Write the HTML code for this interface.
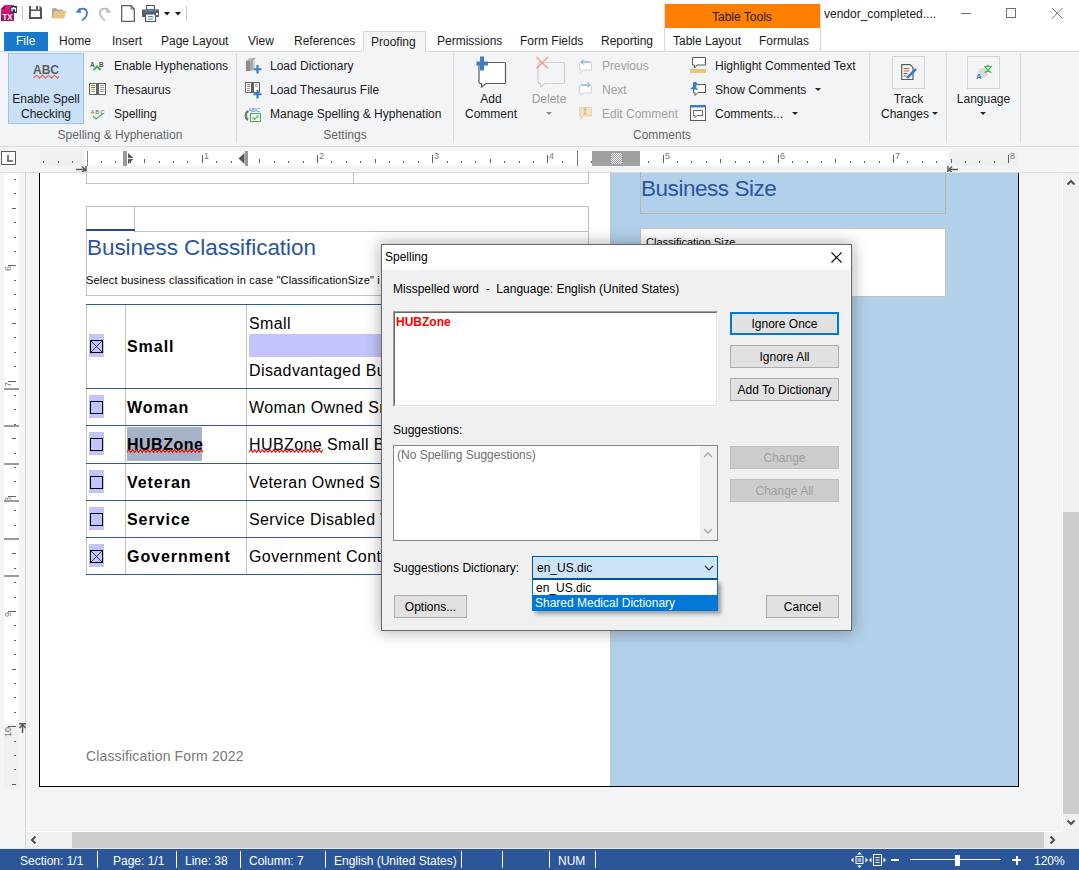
<!DOCTYPE html>
<html><head><meta charset="utf-8">
<style>
*{box-sizing:border-box}
html,body{margin:0;padding:0;width:1079px;height:870px;overflow:hidden;background:#fff;font-family:"Liberation Sans",sans-serif;font-size:12px;color:#1a1a1a}
.a{position:absolute}
.t{position:absolute;white-space:nowrap;line-height:12px;font-size:12px}
svg{position:absolute;overflow:visible}
</style></head><body>

<!-- ===== TITLE BAR ===== -->
<div class="a" id="titlebar" style="left:0;top:0;width:1079px;height:28px;background:#fff"></div>
<div class="a" style="left:665px;top:4px;width:155px;height:24px;background:#ff8000"></div>
<div class="t" style="left:712px;top:11px;color:#1a1a1a">Table Tools</div>
<div class="t" style="left:824px;top:8px;color:#1a1a1a">vendor_completed....</div>

<!-- ===== TAB ROW ===== -->
<div class="a" style="left:4px;top:32px;width:44px;height:19px;background:#1979ca"></div>
<div class="t" style="left:16px;top:35px;color:#fff">File</div>
<div class="t" style="left:59px;top:35px">Home</div>
<div class="t" style="left:112px;top:35px">Insert</div>
<div class="t" style="left:161px;top:35px">Page Layout</div>
<div class="t" style="left:248px;top:35px">View</div>
<div class="t" style="left:294px;top:35px">References</div>
<div class="a" style="left:363px;top:31px;width:63px;height:21px;background:#f3f4f6;border:1px solid #d5d5d5;border-bottom:none"></div>
<div class="t" style="left:371px;top:36px">Proofing</div>
<div class="t" style="left:437px;top:35px">Permissions</div>
<div class="t" style="left:520px;top:35px">Form Fields</div>
<div class="t" style="left:601px;top:35px">Reporting</div>
<div class="a" style="left:664px;top:3px;width:157px;height:48px;border-left:1px solid #dadada;border-right:1px solid #dadada"></div>
<div class="t" style="left:673px;top:35px">Table Layout</div>
<div class="t" style="left:759px;top:35px">Formulas</div>

<!-- ===== RIBBON ===== -->
<div class="a" id="ribbon" style="left:0;top:51px;width:1079px;height:96px;background:#f3f4f6;border-top:1px solid #dadada;border-bottom:1px solid #dadada"></div>
<div class="a" style="left:364px;top:51px;width:61px;height:1px;background:#f3f4f6"></div>


<!-- title bar icons -->
<svg style="left:1px;top:5px" width="17" height="16" viewBox="0 0 17 16">
  <defs><linearGradient id="txg" x1="0" y1="0" x2="0" y2="1"><stop offset="0" stop-color="#f0188a"/><stop offset="0.45" stop-color="#cc1570"/><stop offset="1" stop-color="#9a0f58"/></linearGradient></defs>
  <path d="M4 0 H13 V16 H0 V4 Z" fill="url(#txg)"/>
  <path d="M4 0 V4 H0 Z" fill="#7a0c44"/>
  <rect x="9.5" y="1" width="6.5" height="7" fill="#1d3565"/>
  <path d="M11 6.5 V3.5 H14.5 V6.5 M12.5 3.5 V2" fill="none" stroke="#fff" stroke-width="1.3"/>
  <text x="6.5" y="15" font-size="8.5" font-weight="bold" fill="#fff" text-anchor="middle" font-family="Liberation Sans" textLength="10" lengthAdjust="spacingAndGlyphs">TX</text>
</svg>
<div class="a" style="left:22px;top:6px;width:1px;height:15px;background:#c8c8c8"></div>
<svg style="left:29px;top:6px" width="13" height="13" viewBox="0 0 13 13">
  <path fill-rule="evenodd" d="M0 0 H2 V3.5 H10.5 V0 H11 L13 2 V13 H0 Z M2 5 V11 H11 V5 Z" fill="#555"/>
  <rect x="7" y="0" width="2" height="3.5" fill="#555"/>
</svg>
<svg style="left:52px;top:8px" width="15" height="11" viewBox="0 0 15 11">
  <path d="M0 1.5 Q0 0 1.5 0 H4 L5.5 1.5 H10 Q11 1.5 11 2.5 V10 H0 Z" fill="#ababab"/>
  <path d="M2 3 H14.5 L12 10.5 H0.5 Z" fill="#ebc57c"/>
</svg>
<svg style="left:75px;top:6px" width="14" height="15" viewBox="0 0 14 15">
  <path d="M3.5 4.5 C6 1.5 12 2 12 7 C12 11 9 13 7 14.5" fill="none" stroke="#3d7cc3" stroke-width="1.8"/>
  <path d="M0.5 6.5 L5 1.5 L6 7 Z" fill="#3d7cc3"/>
</svg>
<svg style="left:98px;top:6px" width="14" height="15" viewBox="0 0 14 15">
  <path d="M10.5 4.5 C8 1.5 2 2 2 7 C2 11 5 13 7 14.5" fill="none" stroke="#bdbdbd" stroke-width="1.8"/>
  <path d="M13.5 6.5 L9 1.5 L8 7 Z" fill="#bdbdbd"/>
</svg>
<svg style="left:121px;top:5px" width="14" height="17" viewBox="0 0 14 17">
  <path d="M0.7 0.7 H10 L13.3 4 V16.3 H0.7 Z" fill="#fff" stroke="#5f5f5f" stroke-width="1.3"/>
  <path d="M10 0.7 V4 H13.3" fill="none" stroke="#5f5f5f" stroke-width="1"/>
</svg>
<svg style="left:142px;top:5px" width="17" height="17" viewBox="0 0 17 17">
  <rect x="4.5" y="0.5" width="8" height="4" fill="#fff" stroke="#5f5f5f" stroke-width="1.2"/>
  <rect x="0" y="4.5" width="17" height="7.5" fill="#5f5f5f"/>
  <rect x="3" y="4.5" width="11" height="2" fill="#4f86c6"/>
  <rect x="3.5" y="9" width="10" height="7.5" fill="#fff" stroke="#5f5f5f" stroke-width="1.2"/>
  <rect x="6" y="11" width="5" height="1" fill="#4f86c6"/><rect x="6" y="13.5" width="5" height="1" fill="#4f86c6"/>
  <rect x="14" y="8" width="2" height="2" fill="#fff"/>
</svg>
<svg style="left:164px;top:12px" width="6" height="4"><path d="M0 0 H6 L3 3.5 Z" fill="#1a1a1a"/></svg>
<svg style="left:175px;top:12px" width="6" height="4"><path d="M0 0 H6 L3 3.5 Z" fill="#1a1a1a"/></svg>
<div class="a" style="left:186px;top:6px;width:1px;height:15px;background:#c8c8c8"></div>
<div class="a" style="left:961px;top:13px;width:10px;height:1px;background:#707070"></div>
<div class="a" style="left:1006px;top:8px;width:10px;height:10px;border:1px solid #707070"></div>
<svg style="left:1052px;top:8px" width="11" height="11" viewBox="0 0 11 11"><path d="M0 0 L10.5 10.5 M10.5 0 L0 10.5" stroke="#707070" stroke-width="1"/></svg>

<!-- ribbon: Spelling & Hyphenation -->
<div class="a" style="left:8px;top:53px;width:76px;height:71px;background:#c9e0f7;border:1px solid #98c6ee"></div>
<svg style="left:33px;top:64px" width="27" height="16" viewBox="0 0 27 16">
  <text x="13" y="9.6" font-size="12.5" font-weight="bold" fill="#5f5f5f" text-anchor="middle" font-family="Liberation Sans" textLength="26" lengthAdjust="spacingAndGlyphs">ABC</text>
  <path d="M0.5 14.2 L3.5 11.2 L6.5 14.2 L9.5 11.2 L12.5 14.2 L15.5 11.2 L18.5 14.2 L21.5 11.2 L24.5 14.2 L26 12.7" fill="none" stroke="#e2673f" stroke-width="1.1"/>
</svg>
<div class="t" style="left:8px;width:76px;text-align:center;top:93px">Enable Spell</div>
<div class="t" style="left:8px;width:76px;text-align:center;top:108px">Checking</div>
<svg style="left:90px;top:61px" width="16" height="10" viewBox="0 0 16 10">
  <text x="0" y="6" font-size="6.5" fill="#555" font-family="Liberation Sans" font-weight="bold">A</text>
  <text x="9" y="6" font-size="6.5" fill="#555" font-family="Liberation Sans" font-weight="bold">B</text>
  <path d="M3.5 9 L7 5.5 L10.5 9" fill="none" stroke="#3cb44a" stroke-width="2"/>
</svg>
<div class="t" style="left:114px;top:60px">Enable Hyphenations</div>
<svg style="left:89px;top:83px" width="17" height="12" viewBox="0 0 17 12">
  <path d="M0.5 0.5 H7.5 V11.5 H0.5 Z M9.5 0.5 H16.5 V11.5 H9.5 Z" fill="#fff" stroke="#606060" stroke-width="1"/>
  <rect x="7" y="0" width="3" height="12" fill="#606060"/>
  <rect x="2" y="2" width="4" height="1" fill="#3cb44a"/><rect x="2" y="4" width="4" height="1" fill="#e0503c"/>
  <rect x="2" y="6" width="4" height="1" fill="#9a9a9a"/><rect x="2" y="8" width="4" height="1" fill="#9a9a9a"/>
  <rect x="11" y="2" width="4" height="1" fill="#9a9a9a"/><rect x="11" y="4" width="4" height="1" fill="#9a9a9a"/>
  <rect x="11" y="6" width="4" height="1" fill="#9a9a9a"/><rect x="11" y="8" width="4" height="1" fill="#9a9a9a"/>
</svg>
<div class="t" style="left:114px;top:84px">Thesaurus</div>
<svg style="left:90px;top:108px" width="16" height="13" viewBox="0 0 16 13">
  <text x="7.5" y="6" font-size="6" fill="#666" text-anchor="middle" font-family="Liberation Sans" textLength="14">ABC</text>
  <path d="M3 8 L6 11 L13 5.5" fill="none" stroke="#3cb44a" stroke-width="1.2"/>
</svg>
<div class="t" style="left:114px;top:108px">Spelling</div>
<div class="t" style="left:0px;width:240px;text-align:center;top:129px;color:#666">Spelling &amp; Hyphenation</div>
<div class="a" style="left:236px;top:53px;width:1px;height:90px;background:#dadada"></div>

<!-- Settings -->
<svg style="left:245px;top:57px" width="17" height="17" viewBox="0 0 17 17">
  <path d="M1 4 L4 1 H8 L5 4 Z" fill="#bdbdbd"/>
  <path d="M1 4 H5 V14 H1 Z" fill="#8c8c8c"/>
  <path d="M5 4 L8 1 V11 L5 14 Z" fill="#6e6e6e"/>
  <path d="M5 4 L8 1 H11 L8 4 V13 L5 14 Z" fill="#a8a8a8"/>
  <path d="M8 4 H10 V12 H8 Z" fill="#d0d0d0"/>
  <path d="M12.5 8 V16.5 M8.5 12.25 H16.5" stroke="#3d7cc3" stroke-width="2.2"/>
</svg>
<div class="t" style="left:270px;top:60px">Load Dictionary</div>
<svg style="left:245px;top:82px" width="17" height="17" viewBox="0 0 17 17">
  <path d="M0.5 0.5 H6.5 V10.5 H0.5 Z M8.5 0.5 H14.5 V10.5 H8.5 Z" fill="#fff" stroke="#606060" stroke-width="1"/>
  <rect x="6" y="0" width="3" height="11" fill="#606060"/>
  <rect x="2" y="2" width="3" height="1" fill="#3cb44a"/><rect x="2" y="4" width="3" height="1" fill="#e0503c"/><rect x="2" y="6" width="3" height="1" fill="#9a9a9a"/><rect x="2" y="8" width="3" height="1" fill="#9a9a9a"/>
  <rect x="10" y="2" width="3" height="1" fill="#9a9a9a"/><rect x="10" y="4" width="3" height="1" fill="#9a9a9a"/>
  <path d="M12.5 8 V16.5 M8.5 12.25 H16.5" stroke="#3d7cc3" stroke-width="2.2"/>
</svg>
<div class="t" style="left:270px;top:84px">Load Thesaurus File</div>
<svg style="left:245px;top:106px" width="17" height="16" viewBox="0 0 17 16">
  <text x="9" y="6" font-size="6" fill="#4f86c6" text-anchor="middle" font-family="Liberation Sans" textLength="12">ABC</text>
  <path d="M3 5 C0 7 0 12 3 14" fill="none" stroke="#777" stroke-width="2.5"/>
  <rect x="5.5" y="7.5" width="10" height="8" fill="#fff" stroke="#3cb44a" stroke-width="1"/>
  <path d="M7.5 11.5 L9.5 13.5 L13.5 9.5" fill="none" stroke="#3cb44a" stroke-width="1.2"/>
</svg>
<div class="t" style="left:270px;top:108px">Manage Spelling &amp; Hyphenation</div>
<div class="t" style="left:237px;width:216px;text-align:center;top:129px;color:#666">Settings</div>
<div class="a" style="left:453px;top:53px;width:1px;height:90px;background:#dadada"></div>

<!-- Comments -->
<svg style="left:476px;top:56px" width="31" height="31" viewBox="0 0 31 31">
  <path d="M4.5 6.5 H28 a1.5 1.5 0 0 1 1.5 1.5 V26 a1.5 1.5 0 0 1 -1.5 1.5 H10 L5.5 31 V27.5 H4.5 a1.5 1.5 0 0 1 -1.5 -1.5 V8 a1.5 1.5 0 0 1 1.5 -1.5 Z" fill="#fff" stroke="#595959" stroke-width="1.2"/>
  <path d="M6 0.5 V14.5 M0.5 7.5 H12" stroke="#3f7dc0" stroke-width="4"/>
</svg>
<div class="t" style="left:464px;width:54px;text-align:center;top:93px">Add</div>
<div class="t" style="left:462px;width:58px;text-align:center;top:108px">Comment</div>
<svg style="left:535px;top:56px" width="31" height="31" viewBox="0 0 31 31">
  <path d="M4.5 6.5 H28 a1.5 1.5 0 0 1 1.5 1.5 V26 a1.5 1.5 0 0 1 -1.5 1.5 H10 L5.5 31 V27.5 H4.5 a1.5 1.5 0 0 1 -1.5 -1.5 V8 a1.5 1.5 0 0 1 1.5 -1.5 Z" fill="none" stroke="#d0d0d0" stroke-width="1.2"/>
  <path d="M1.5 1 L13 12.5 M13 1 L1.5 12.5" stroke="#eea596" stroke-width="1.6"/>
</svg>
<div class="t" style="left:531px;width:36px;text-align:center;top:93px;color:#a0a0a0">Delete</div>
<svg style="left:546px;top:112px" width="6" height="4"><path d="M0 0 H6 L3 3 Z" fill="#8a8a8a"/></svg>
<svg style="left:578px;top:59px" width="15" height="14" viewBox="0 0 15 14">
  <path d="M1.5 3.5 H13.5 V11 H5 L3 13.5 V11 H1.5 Z" fill="#fff" stroke="#c9d4e2" stroke-width="1"/>
  <path d="M3 3 H12 M3 3 L5.5 0.8 M3 3 L5.5 5.2" stroke="#9fbce0" stroke-width="1.3" fill="none"/>
</svg>
<div class="t" style="left:602px;top:60px;color:#a0a0a0">Previous</div>
<svg style="left:578px;top:82px" width="15" height="14" viewBox="0 0 15 14">
  <path d="M1.5 3.5 H13.5 V11 H5 L3 13.5 V11 H1.5 Z" fill="#fff" stroke="#c9d4e2" stroke-width="1"/>
  <path d="M3 3 H12 M12 3 L9.5 0.8 M12 3 L9.5 5.2" stroke="#9fbce0" stroke-width="1.3" fill="none"/>
</svg>
<div class="t" style="left:602px;top:84px;color:#a0a0a0">Next</div>
<svg style="left:578px;top:106px" width="15" height="15" viewBox="0 0 15 15">
  <path d="M1.5 1.5 H13.5 V10 H5 L3 13.5 V10 H1.5 Z" fill="#f3e2c0" stroke="#e8d3a8" stroke-width="1"/>
  <path d="M7 3 V8 M5.5 3 H8.5 M5.5 8 H8.5" stroke="#b9a37a" stroke-width="0.8"/>
</svg>
<div class="t" style="left:602px;top:108px;color:#a0a0a0">Edit Comment</div>
<svg style="left:690px;top:57px" width="16" height="16" viewBox="0 0 16 16">
  <path d="M2.5 0.5 H15.5 V8 H7 L4.5 11 V8 H2.5 Z" fill="#fff" stroke="#595959" stroke-width="1"/>
  <rect x="0" y="12" width="16" height="4" fill="#e9c77a"/>
</svg>
<div class="t" style="left:715px;top:60px">Highlight Commented Text</div>
<svg style="left:690px;top:81px" width="16" height="16" viewBox="0 0 16 16">
  <path d="M3.5 3.5 H15.5 V11.5 H8 L5 14.5 V11.5 H3.5 Z" fill="#fff" stroke="#595959" stroke-width="1"/>
  <circle cx="5" cy="3" r="2.2" fill="#3f7dc0"/><path d="M0 8 L5 4 L8 9 Z" fill="#3f7dc0"/>
</svg>
<div class="t" style="left:715px;top:84px">Show Comments</div>
<svg style="left:815px;top:88px" width="6" height="4"><path d="M0 0 H6 L3 3 Z" fill="#262626"/></svg>
<svg style="left:690px;top:105px" width="16" height="17" viewBox="0 0 16 17">
  <rect x="0.5" y="1.5" width="15" height="14" fill="#fff" stroke="#595959" stroke-width="1"/>
  <rect x="0" y="0" width="16" height="2.5" fill="#3f7dc0"/>
  <path d="M3.5 5.5 H12.5 V10.5 H7 L5 12.5 V10.5 H3.5 Z" fill="none" stroke="#595959" stroke-width="0.9"/>
</svg>
<div class="t" style="left:715px;top:108px">Comments...</div>
<svg style="left:792px;top:112px" width="6" height="4"><path d="M0 0 H6 L3 3 Z" fill="#262626"/></svg>
<div class="t" style="left:454px;width:416px;text-align:center;top:129px;color:#666">Comments</div>
<div class="a" style="left:869px;top:53px;width:1px;height:90px;background:#dadada"></div>

<!-- Track Changes -->
<div class="a" style="left:892px;top:56px;width:33px;height:33px;border:1px solid #d4d4d4"></div>
<svg style="left:901px;top:64px" width="17" height="17" viewBox="0 0 17 17">
  <path d="M0.7 0.7 H9 L12 3.7 V15.5 H0.7 Z" fill="#fff" stroke="#595959" stroke-width="1.2"/>
  <rect x="2.5" y="4" width="6" height="1" fill="#e0503c"/><rect x="2.5" y="6.5" width="6" height="1" fill="#e0503c"/><rect x="2.5" y="9" width="4" height="1" fill="#595959"/><rect x="2.5" y="11.5" width="3" height="1" fill="#595959"/>
  <path d="M6 14 L15 5" stroke="#3f7dc0" stroke-width="2.5"/>
</svg>
<div class="t" style="left:870px;width:77px;text-align:center;top:93px">Track</div>
<div class="t" style="left:881px;top:108px">Changes</div>
<svg style="left:932px;top:112px" width="6" height="4"><path d="M0 0 H6 L3 3 Z" fill="#262626"/></svg>
<div class="a" style="left:946px;top:53px;width:1px;height:90px;background:#dadada"></div>

<!-- Language -->
<div class="a" style="left:967px;top:56px;width:33px;height:33px;border:1px solid #d4d4d4"></div>
<svg style="left:975px;top:64px" width="17" height="16" viewBox="0 0 17 16">
  <circle cx="8" cy="9" r="5" fill="#d9d9d9"/>
  <text x="1" y="15" font-size="8" font-weight="bold" fill="#3f7dc0" font-family="Liberation Sans">A</text>
  <path d="M13 0.5 V2 M9 2.5 H17 M10.5 3 Q12 7 16.5 8.5 M15.5 3 Q14 7 9.5 8.5" fill="none" stroke="#3cb44a" stroke-width="1.2"/>
</svg>
<div class="t" style="left:947px;width:73px;text-align:center;top:93px">Language</div>
<svg style="left:980px;top:112px" width="6" height="4"><path d="M0 0 H6 L3 3 Z" fill="#262626"/></svg>
<div class="a" style="left:1020px;top:53px;width:1px;height:90px;background:#dadada"></div>

<!-- ===== RULER AREA ===== -->
<div class="a" style="left:0;top:147px;width:1079px;height:25px;background:#f3f4f6"></div>


<div class="a" style="left:1px;top:151px;width:15px;height:14px;border:1px solid #5a5a5a;background:#fff"></div>
<svg style="left:7px;top:155px" width="6" height="7"><path d="M1 0 V6 H6" fill="none" stroke="#5a5a5a" stroke-width="1.6"/></svg>
<div class="a" style="left:40px;top:151px;width:978px;height:15px;background:#fff"></div>
<div class="a" style="left:40px;top:151px;width:45px;height:15px;background:#f0f0f0"></div>
<div class="a" style="left:949px;top:151px;width:69px;height:15px;background:#f0f0f0"></div>
<div class="a" style="left:87px;top:151px;width:1px;height:15px;background:#888"></div>
<div class="a" style="left:76px;top:169px;width:9px;height:1px;background:#5a5a5a"></div>
<svg style="left:76px;top:166px" width="11" height="7"><path d="M0 3.5 H9 M6 0.5 L9 3.5 L6 6.5 M10 0 V7" fill="none" stroke="#5a5a5a" stroke-width="1.5"/></svg>
<svg style="left:947px;top:166px" width="11" height="7"><path d="M11 3.5 H2 M5 0.5 L2 3.5 L5 6.5 M1 0 V7" fill="none" stroke="#5a5a5a" stroke-width="1.5"/></svg>
<!--HTICKS-->
<div class="a" style="left:43px;top:161px;width:1px;height:2px;background:#606060"></div>
<div class="a" style="left:58px;top:161px;width:1px;height:2px;background:#606060"></div>
<div class="a" style="left:72px;top:161px;width:1px;height:2px;background:#606060"></div>
<div class="a" style="left:101px;top:161px;width:1px;height:2px;background:#606060"></div>
<div class="a" style="left:115px;top:161px;width:1px;height:2px;background:#606060"></div>
<div class="a" style="left:130px;top:161px;width:1px;height:2px;background:#606060"></div>
<div class="a" style="left:144px;top:159px;width:1px;height:4px;background:#606060"></div>
<div class="a" style="left:159px;top:161px;width:1px;height:2px;background:#606060"></div>
<div class="a" style="left:173px;top:161px;width:1px;height:2px;background:#606060"></div>
<div class="a" style="left:187px;top:161px;width:1px;height:2px;background:#606060"></div>
<div class="a" style="left:202px;top:155px;width:1px;height:8px;background:#606060"></div>
<div class="t" style="left:204px;top:152px;font-size:9px;line-height:9px;color:#777">1</div>
<div class="a" style="left:216px;top:161px;width:1px;height:2px;background:#606060"></div>
<div class="a" style="left:231px;top:161px;width:1px;height:2px;background:#606060"></div>
<div class="a" style="left:245px;top:161px;width:1px;height:2px;background:#606060"></div>
<div class="a" style="left:259px;top:159px;width:1px;height:4px;background:#606060"></div>
<div class="a" style="left:274px;top:161px;width:1px;height:2px;background:#606060"></div>
<div class="a" style="left:288px;top:161px;width:1px;height:2px;background:#606060"></div>
<div class="a" style="left:303px;top:161px;width:1px;height:2px;background:#606060"></div>
<div class="a" style="left:317px;top:155px;width:1px;height:8px;background:#606060"></div>
<div class="t" style="left:319px;top:152px;font-size:9px;line-height:9px;color:#777">2</div>
<div class="a" style="left:331px;top:161px;width:1px;height:2px;background:#606060"></div>
<div class="a" style="left:346px;top:161px;width:1px;height:2px;background:#606060"></div>
<div class="a" style="left:360px;top:161px;width:1px;height:2px;background:#606060"></div>
<div class="a" style="left:375px;top:159px;width:1px;height:4px;background:#606060"></div>
<div class="a" style="left:389px;top:161px;width:1px;height:2px;background:#606060"></div>
<div class="a" style="left:403px;top:161px;width:1px;height:2px;background:#606060"></div>
<div class="a" style="left:418px;top:161px;width:1px;height:2px;background:#606060"></div>
<div class="a" style="left:432px;top:155px;width:1px;height:8px;background:#606060"></div>
<div class="t" style="left:434px;top:152px;font-size:9px;line-height:9px;color:#777">3</div>
<div class="a" style="left:447px;top:161px;width:1px;height:2px;background:#606060"></div>
<div class="a" style="left:461px;top:161px;width:1px;height:2px;background:#606060"></div>
<div class="a" style="left:475px;top:161px;width:1px;height:2px;background:#606060"></div>
<div class="a" style="left:490px;top:159px;width:1px;height:4px;background:#606060"></div>
<div class="a" style="left:504px;top:161px;width:1px;height:2px;background:#606060"></div>
<div class="a" style="left:519px;top:161px;width:1px;height:2px;background:#606060"></div>
<div class="a" style="left:533px;top:161px;width:1px;height:2px;background:#606060"></div>
<div class="a" style="left:547px;top:155px;width:1px;height:8px;background:#606060"></div>
<div class="t" style="left:549px;top:152px;font-size:9px;line-height:9px;color:#777">4</div>
<div class="a" style="left:562px;top:161px;width:1px;height:2px;background:#606060"></div>
<div class="a" style="left:591px;top:161px;width:1px;height:2px;background:#606060"></div>
<div class="a" style="left:605px;top:159px;width:1px;height:4px;background:#606060"></div>
<div class="a" style="left:619px;top:161px;width:1px;height:2px;background:#606060"></div>
<div class="a" style="left:634px;top:161px;width:1px;height:2px;background:#606060"></div>
<div class="a" style="left:648px;top:161px;width:1px;height:2px;background:#606060"></div>
<div class="a" style="left:663px;top:155px;width:1px;height:8px;background:#606060"></div>
<div class="t" style="left:665px;top:152px;font-size:9px;line-height:9px;color:#777">5</div>
<div class="a" style="left:677px;top:161px;width:1px;height:2px;background:#606060"></div>
<div class="a" style="left:691px;top:161px;width:1px;height:2px;background:#606060"></div>
<div class="a" style="left:706px;top:161px;width:1px;height:2px;background:#606060"></div>
<div class="a" style="left:720px;top:159px;width:1px;height:4px;background:#606060"></div>
<div class="a" style="left:735px;top:161px;width:1px;height:2px;background:#606060"></div>
<div class="a" style="left:749px;top:161px;width:1px;height:2px;background:#606060"></div>
<div class="a" style="left:763px;top:161px;width:1px;height:2px;background:#606060"></div>
<div class="a" style="left:778px;top:155px;width:1px;height:8px;background:#606060"></div>
<div class="t" style="left:780px;top:152px;font-size:9px;line-height:9px;color:#777">6</div>
<div class="a" style="left:792px;top:161px;width:1px;height:2px;background:#606060"></div>
<div class="a" style="left:807px;top:161px;width:1px;height:2px;background:#606060"></div>
<div class="a" style="left:821px;top:161px;width:1px;height:2px;background:#606060"></div>
<div class="a" style="left:835px;top:159px;width:1px;height:4px;background:#606060"></div>
<div class="a" style="left:850px;top:161px;width:1px;height:2px;background:#606060"></div>
<div class="a" style="left:864px;top:161px;width:1px;height:2px;background:#606060"></div>
<div class="a" style="left:879px;top:161px;width:1px;height:2px;background:#606060"></div>
<div class="a" style="left:893px;top:155px;width:1px;height:8px;background:#606060"></div>
<div class="t" style="left:895px;top:152px;font-size:9px;line-height:9px;color:#777">7</div>
<div class="a" style="left:907px;top:161px;width:1px;height:2px;background:#606060"></div>
<div class="a" style="left:922px;top:161px;width:1px;height:2px;background:#606060"></div>
<div class="a" style="left:936px;top:161px;width:1px;height:2px;background:#606060"></div>
<div class="a" style="left:951px;top:159px;width:1px;height:4px;background:#606060"></div>
<div class="a" style="left:965px;top:161px;width:1px;height:2px;background:#606060"></div>
<div class="a" style="left:979px;top:161px;width:1px;height:2px;background:#606060"></div>
<div class="a" style="left:994px;top:161px;width:1px;height:2px;background:#606060"></div>
<div class="a" style="left:1008px;top:155px;width:1px;height:8px;background:#606060"></div>
<div class="t" style="left:1010px;top:152px;font-size:9px;line-height:9px;color:#777">8</div>
<div class="a" style="left:577px;top:151px;width:1px;height:15px;background:#7a7a7a"></div>
<div class="a" style="left:592px;top:151px;width:48px;height:15px;background:#a0a0a0"></div>
<div class="a" style="left:611px;top:153px;width:11px;height:11px;background:repeating-conic-gradient(#f4f4f4 0 25%, #a0a0a0 0 50%) 0 0/2px 2px"></div>
<!--/HTICKS-->
<div class="a" style="left:123px;top:151px;width:4px;height:15px;background:#999"></div>
<svg style="left:128px;top:153px" width="6" height="12"><path d="M0 0 L5.5 5 H0 Z M0 6 H5.5 L0 11 Z" fill="#5a5a5a"/></svg>
<svg style="left:238px;top:153px" width="7" height="12"><path d="M6.5 0 L0.5 5.5 L6.5 11 Z" fill="#5a5a5a"/></svg>
<div class="a" style="left:245px;top:151px;width:3px;height:15px;background:#999"></div>

<!-- ===== CANVAS ===== -->
<div class="a" id="canvas" style="left:0;top:172px;width:1079px;height:677px;background:#f3f4f6"></div>


<!-- vertical ruler -->
<div class="a" style="left:4px;top:172px;width:15px;height:614px;background:#fff"></div>
<div class="a" style="left:25px;top:172px;width:1px;height:677px;background:#d6d6d6"></div>
<!--VTICKS-->
<div class="a" style="left:4px;top:724px;width:15px;height:62px;background:#f0f0f0"></div>
<div class="a" style="left:14px;top:179px;width:2px;height:1px;background:#606060"></div>
<div class="a" style="left:14px;top:193px;width:2px;height:1px;background:#606060"></div>
<div class="a" style="left:12px;top:208px;width:4px;height:1px;background:#606060"></div>
<div class="a" style="left:14px;top:222px;width:2px;height:1px;background:#606060"></div>
<div class="a" style="left:14px;top:237px;width:2px;height:1px;background:#606060"></div>
<div class="a" style="left:14px;top:251px;width:2px;height:1px;background:#606060"></div>
<div class="a" style="left:8px;top:265px;width:8px;height:1px;background:#606060"></div>
<div class="t" style="left:4px;top:271px;font-size:9px;line-height:9px;color:#777;transform:rotate(-90deg);transform-origin:0 0">6</div>
<div class="a" style="left:14px;top:280px;width:2px;height:1px;background:#606060"></div>
<div class="a" style="left:14px;top:294px;width:2px;height:1px;background:#606060"></div>
<div class="a" style="left:14px;top:309px;width:2px;height:1px;background:#606060"></div>
<div class="a" style="left:12px;top:323px;width:4px;height:1px;background:#606060"></div>
<div class="a" style="left:14px;top:337px;width:2px;height:1px;background:#606060"></div>
<div class="a" style="left:14px;top:352px;width:2px;height:1px;background:#606060"></div>
<div class="a" style="left:14px;top:366px;width:2px;height:1px;background:#606060"></div>
<div class="a" style="left:8px;top:381px;width:8px;height:1px;background:#606060"></div>
<div class="t" style="left:4px;top:387px;font-size:9px;line-height:9px;color:#777;transform:rotate(-90deg);transform-origin:0 0">7</div>
<div class="a" style="left:14px;top:395px;width:2px;height:1px;background:#606060"></div>
<div class="a" style="left:14px;top:409px;width:2px;height:1px;background:#606060"></div>
<div class="a" style="left:14px;top:424px;width:2px;height:1px;background:#606060"></div>
<div class="a" style="left:12px;top:438px;width:4px;height:1px;background:#606060"></div>
<div class="a" style="left:14px;top:453px;width:2px;height:1px;background:#606060"></div>
<div class="a" style="left:14px;top:467px;width:2px;height:1px;background:#606060"></div>
<div class="a" style="left:14px;top:481px;width:2px;height:1px;background:#606060"></div>
<div class="a" style="left:8px;top:496px;width:8px;height:1px;background:#606060"></div>
<div class="t" style="left:4px;top:502px;font-size:9px;line-height:9px;color:#777;transform:rotate(-90deg);transform-origin:0 0">8</div>
<div class="a" style="left:14px;top:510px;width:2px;height:1px;background:#606060"></div>
<div class="a" style="left:14px;top:525px;width:2px;height:1px;background:#606060"></div>
<div class="a" style="left:14px;top:539px;width:2px;height:1px;background:#606060"></div>
<div class="a" style="left:12px;top:553px;width:4px;height:1px;background:#606060"></div>
<div class="a" style="left:14px;top:568px;width:2px;height:1px;background:#606060"></div>
<div class="a" style="left:14px;top:582px;width:2px;height:1px;background:#606060"></div>
<div class="a" style="left:14px;top:597px;width:2px;height:1px;background:#606060"></div>
<div class="a" style="left:8px;top:611px;width:8px;height:1px;background:#606060"></div>
<div class="t" style="left:4px;top:617px;font-size:9px;line-height:9px;color:#777;transform:rotate(-90deg);transform-origin:0 0">9</div>
<div class="a" style="left:14px;top:625px;width:2px;height:1px;background:#606060"></div>
<div class="a" style="left:14px;top:640px;width:2px;height:1px;background:#606060"></div>
<div class="a" style="left:14px;top:654px;width:2px;height:1px;background:#606060"></div>
<div class="a" style="left:12px;top:669px;width:4px;height:1px;background:#606060"></div>
<div class="a" style="left:14px;top:683px;width:2px;height:1px;background:#606060"></div>
<div class="a" style="left:14px;top:697px;width:2px;height:1px;background:#606060"></div>
<div class="a" style="left:14px;top:712px;width:2px;height:1px;background:#606060"></div>
<div class="a" style="left:8px;top:726px;width:8px;height:1px;background:#606060"></div>
<div class="t" style="left:4px;top:737px;font-size:9px;line-height:9px;color:#777;transform:rotate(-90deg);transform-origin:0 0">10</div>
<div class="a" style="left:14px;top:741px;width:2px;height:1px;background:#606060"></div>
<div class="a" style="left:14px;top:755px;width:2px;height:1px;background:#606060"></div>
<div class="a" style="left:14px;top:769px;width:2px;height:1px;background:#606060"></div>
<div class="a" style="left:12px;top:784px;width:4px;height:1px;background:#606060"></div>
<svg style="left:19px;top:723px" width="7" height="11"><path d="M0 0.75 H7 M3.5 10 V2 M0.5 5 L3.5 1.5 L6.5 5" fill="none" stroke="#5a5a5a" stroke-width="1.5"/></svg>
<div class="a" style="left:4px;top:388px;width:15px;height:2px;background:#9a9a9a"></div>
<div class="a" style="left:4px;top:425px;width:15px;height:2px;background:#9a9a9a"></div>
<div class="a" style="left:4px;top:463px;width:15px;height:2px;background:#9a9a9a"></div>
<div class="a" style="left:4px;top:500px;width:15px;height:2px;background:#9a9a9a"></div>
<div class="a" style="left:4px;top:538px;width:15px;height:2px;background:#9a9a9a"></div>
<div class="a" style="left:4px;top:575px;width:15px;height:2px;background:#9a9a9a"></div>
<!--/VTICKS-->
<div class="a" style="left:39px;top:172px;width:980px;height:615px;border:1px solid #000;border-top:none;background:#fff"></div>
<div class="a" style="left:611px;top:172px;width:407px;height:614px;background:#b3d0ea"></div>
<!-- vertical scrollbar -->
<div class="a" style="left:1062px;top:173px;width:1px;height:659px;background:#fff"></div>
<div class="a" style="left:26px;top:831px;width:1037px;height:1px;background:#fff"></div>
<div class="a" style="left:1063px;top:173px;width:16px;height:676px;background:#f0f0f0"></div>
<div class="a" style="left:1063px;top:512px;width:16px;height:302px;background:#cdcdcd"></div>
<svg style="left:1066px;top:178px" width="10" height="8"><path d="M1.5 6.5 L5 3 L8.5 6.5" fill="none" stroke="#505050" stroke-width="2"/></svg>
<svg style="left:1066px;top:819px" width="10" height="8"><path d="M1.5 1.5 L5 5 L8.5 1.5" fill="none" stroke="#505050" stroke-width="2"/></svg>
<!-- horizontal scrollbar -->
<div class="a" style="left:26px;top:832px;width:1037px;height:16px;background:#f0f0f0"></div>
<div class="a" style="left:72px;top:832px;width:972px;height:16px;background:#cdcdcd"></div>
<svg style="left:29px;top:835px" width="8" height="10"><path d="M6.5 1.5 L3 5 L6.5 8.5" fill="none" stroke="#505050" stroke-width="2"/></svg>
<svg style="left:1049px;top:835px" width="8" height="10"><path d="M1.5 1.5 L5 5 L1.5 8.5" fill="none" stroke="#505050" stroke-width="2"/></svg>
<div class="a" style="left:0;top:848px;width:1079px;height:1px;background:#e6e6e6"></div>
<!-- ===== DOCUMENT CONTENT ===== -->
<div class="a" style="left:0;top:172px;width:1079px;height:1px;background:#dcdcdc"></div>
<div class="a" style="left:610px;top:172px;width:1px;height:614px;background:#c4c4c4"></div>
<!-- top table remnant -->
<div class="a" style="left:86px;top:171px;width:503px;height:13px;border:1px solid #c0c0c0;border-top:none"></div>
<div class="a" style="left:353px;top:172px;width:1px;height:11px;background:#c0c0c0"></div>
<!-- classification heading box -->
<div class="a" style="left:86px;top:206px;width:503px;height:90px;border:1px solid #c0c0c0"></div>
<div class="a" style="left:134px;top:206px;width:1px;height:25px;background:#c0c0c0"></div>
<div class="a" style="left:134px;top:231px;width:454px;height:1px;background:#c0c0c0"></div>
<div class="a" style="left:86px;top:229px;width:49px;height:2px;background:#234a94"></div>
<div class="t" style="left:87px;top:237px;font-size:22.5px;line-height:22px;color:#2a559f;letter-spacing:-0.05px">Business Classification</div>
<div class="t" style="left:86px;top:275px;font-size:11px;line-height:11px;color:#000;letter-spacing:0.18px">Select business classification in case "ClassificationSize" i</div>

<!-- classification table -->
<div class="a" style="left:86px;top:305px;width:1px;height:269px;background:#c0c0c0"></div>
<div class="a" style="left:125px;top:305px;width:1px;height:269px;background:#c0c0c0"></div>
<div class="a" style="left:246px;top:305px;width:1px;height:269px;background:#c0c0c0"></div>
<div class="a" style="left:86px;top:304px;width:503px;height:1px;background:#2d5aa0"></div>
<div class="a" style="left:86px;top:388px;width:503px;height:1px;background:#2d5aa0"></div>
<div class="a" style="left:86px;top:425px;width:503px;height:1px;background:#2d5aa0"></div>
<div class="a" style="left:86px;top:463px;width:503px;height:1px;background:#2d5aa0"></div>
<div class="a" style="left:86px;top:500px;width:503px;height:1px;background:#2d5aa0"></div>
<div class="a" style="left:86px;top:537px;width:503px;height:1px;background:#2d5aa0"></div>
<div class="a" style="left:86px;top:574px;width:503px;height:1px;background:#2d5aa0"></div>
<!-- row1 -->
<div class="a" style="left:89px;top:334px;width:15px;height:23px;background:#c4c4fa"></div>
<svg style="left:90px;top:340px" width="13" height="13" viewBox="0 0 13 13"><rect x="0.5" y="0.5" width="12" height="12" fill="none" stroke="#000" stroke-width="1"/><path d="M1 1 L12 12 M12 1 L1 12" stroke="#202050" stroke-width="0.9"/></svg>
<div class="t" style="left:127px;top:339px;font-size:16px;line-height:16px;font-weight:bold;color:#000;letter-spacing:0.95px">Small</div>
<div class="t" style="left:249px;top:316px;font-size:16px;line-height:16px;color:#000;letter-spacing:0.4px">Small</div>
<div class="a" style="left:249px;top:334px;width:340px;height:23px;background:#c4c4fa"></div>
<div class="t" style="left:249px;top:363px;font-size:16px;line-height:16px;color:#000;letter-spacing:0.4px">Disadvantaged Business</div>
<div class="a" style="left:89px;top:395px;width:15px;height:23px;background:#c4c4fa"></div>
<svg style="left:90px;top:401px" width="13" height="13" viewBox="0 0 13 13"><rect x="0.5" y="0.5" width="12" height="12" fill="none" stroke="#000" stroke-width="1"/></svg>
<div class="t" style="left:127px;top:400px;font-size:16px;line-height:16px;font-weight:bold;color:#000;letter-spacing:0.95px">Woman</div>
<div class="t" style="left:249px;top:400px;font-size:16px;line-height:16px;color:#000;letter-spacing:0.4px">Woman Owned Small Business</div>
<div class="a" style="left:89px;top:432px;width:15px;height:23px;background:#c4c4fa"></div>
<svg style="left:90px;top:438px" width="13" height="13" viewBox="0 0 13 13"><rect x="0.5" y="0.5" width="12" height="12" fill="none" stroke="#000" stroke-width="1"/></svg>
<div class="a" style="left:127px;top:427px;width:75px;height:34px;background:#a6b2c8"></div>
<div class="t" style="left:127px;top:437px;font-size:16px;line-height:16px;font-weight:bold;color:#000;letter-spacing:0.5px">HUBZone</div>
<div class="t" style="left:249px;top:437px;font-size:16px;line-height:16px;color:#000;letter-spacing:0.4px">HUBZone Small Business</div>
<div class="a" style="left:89px;top:470px;width:15px;height:23px;background:#c4c4fa"></div>
<svg style="left:90px;top:476px" width="13" height="13" viewBox="0 0 13 13"><rect x="0.5" y="0.5" width="12" height="12" fill="none" stroke="#000" stroke-width="1"/></svg>
<div class="t" style="left:127px;top:475px;font-size:16px;line-height:16px;font-weight:bold;color:#000;letter-spacing:0.95px">Veteran</div>
<div class="t" style="left:249px;top:475px;font-size:16px;line-height:16px;color:#000;letter-spacing:0.4px">Veteran Owned Small Business</div>
<div class="a" style="left:89px;top:507px;width:15px;height:23px;background:#c4c4fa"></div>
<svg style="left:90px;top:513px" width="13" height="13" viewBox="0 0 13 13"><rect x="0.5" y="0.5" width="12" height="12" fill="none" stroke="#000" stroke-width="1"/></svg>
<div class="t" style="left:127px;top:512px;font-size:16px;line-height:16px;font-weight:bold;color:#000;letter-spacing:0.95px">Service</div>
<div class="t" style="left:249px;top:512px;font-size:16px;line-height:16px;color:#000;letter-spacing:0.4px">Service Disabled Veteran</div>
<div class="a" style="left:89px;top:544px;width:15px;height:23px;background:#c4c4fa"></div>
<svg style="left:90px;top:550px" width="13" height="13" viewBox="0 0 13 13"><rect x="0.5" y="0.5" width="12" height="12" fill="none" stroke="#000" stroke-width="1"/><path d="M1 1 L12 12 M12 1 L1 12" stroke="#202050" stroke-width="0.9"/></svg>
<div class="t" style="left:127px;top:549px;font-size:16px;line-height:16px;font-weight:bold;color:#000;letter-spacing:0.95px">Government</div>
<div class="t" style="left:249px;top:549px;font-size:16px;line-height:16px;color:#000;letter-spacing:0.4px">Government Contractor</div>

<svg style="left:127px;top:449px" width="75" height="4" viewBox="0 0 75 4"><path d="M0 3.25 l1.9 -2.5 l1.9 2.5 l1.9 -2.5 l1.9 2.5 l1.9 -2.5 l1.9 2.5 l1.9 -2.5 l1.9 2.5 l1.9 -2.5 l1.9 2.5 l1.9 -2.5 l1.9 2.5 l1.9 -2.5 l1.9 2.5 l1.9 -2.5 l1.9 2.5 l1.9 -2.5 l1.9 2.5 l1.9 -2.5 l1.9 2.5 l1.9 -2.5 l1.9 2.5 l1.9 -2.5 l1.9 2.5 l1.9 -2.5 l1.9 2.5 l1.9 -2.5 l1.9 2.5 l1.9 -2.5 l1.9 2.5 l1.9 -2.5 l1.9 2.5 l1.9 -2.5 l1.9 2.5 l1.9 -2.5 l1.9 2.5 l1.9 -2.5 l1.9 2.5 l1.9 -2.5 l1.9 2.5" fill="none" stroke="#e81010" stroke-width="1.2"/></svg>
<svg style="left:249px;top:449px" width="73" height="4" viewBox="0 0 73 4"><path d="M0 3.25 l1.9 -2.5 l1.9 2.5 l1.9 -2.5 l1.9 2.5 l1.9 -2.5 l1.9 2.5 l1.9 -2.5 l1.9 2.5 l1.9 -2.5 l1.9 2.5 l1.9 -2.5 l1.9 2.5 l1.9 -2.5 l1.9 2.5 l1.9 -2.5 l1.9 2.5 l1.9 -2.5 l1.9 2.5 l1.9 -2.5 l1.9 2.5 l1.9 -2.5 l1.9 2.5 l1.9 -2.5 l1.9 2.5 l1.9 -2.5 l1.9 2.5 l1.9 -2.5 l1.9 2.5 l1.9 -2.5 l1.9 2.5 l1.9 -2.5 l1.9 2.5 l1.9 -2.5 l1.9 2.5 l1.9 -2.5 l1.9 2.5 l1.9 -2.5 l1.9 2.5 l1.9 -2.5" fill="none" stroke="#e81010" stroke-width="1.2"/></svg>

<div class="t" style="left:86px;top:749px;font-size:14px;line-height:14px;color:#787878;letter-spacing:0.15px">Classification Form 2022</div>

<!-- right column -->
<div class="a" style="left:640px;top:172px;width:306px;height:42px;border:1px solid #b9b5b0;border-top:none"></div>
<div class="t" style="left:641px;top:178px;font-size:22.5px;line-height:22px;color:#2a559f;letter-spacing:-0.46px">Business Size</div>
<div class="a" style="left:640px;top:228px;width:306px;height:69px;border:1px solid #c8c4c0;background:#fff"></div>
<div class="t" style="left:646px;top:237px;font-size:11px;line-height:11px;color:#000">Classification Size</div>


<!-- ===== SPELLING DIALOG ===== -->
<div class="a" style="left:381px;top:244px;width:471px;height:387px;border:1px solid #666;background:#f0f0f0;box-shadow:0 0 14px 2px rgba(0,0,0,0.28)"></div>
<div class="a" style="left:382px;top:245px;width:469px;height:25px;background:#fff"></div>
<div class="a" style="left:850px;top:270px;width:1px;height:360px;background:#fff"></div>
<div class="t" style="left:385px;top:251px;color:#000">Spelling</div>
<svg style="left:831px;top:252px" width="11" height="11" viewBox="0 0 11 11"><path d="M0.5 0.5 L10.5 10.5 M10.5 0.5 L0.5 10.5" stroke="#000" stroke-width="1.1"/></svg>
<div class="t" style="left:393px;top:283px;color:#000">Misspelled word&nbsp; -&nbsp; Language: English (United States)</div>
<!-- misspelled textbox (sunken) -->
<div class="a" style="left:393px;top:311px;width:325px;height:96px;background:#fff;border-top:1px solid #a0a0a0;border-left:1px solid #a0a0a0;border-right:1px solid #fff;border-bottom:1px solid #fff"></div>
<div class="a" style="left:394px;top:312px;width:323px;height:94px;border-top:1px solid #696969;border-left:1px solid #696969;border-right:1px solid #e3e3e3;border-bottom:1px solid #e3e3e3"></div>
<div class="t" style="left:396px;top:316px;font-weight:bold;color:#ff0000">HUBZone</div>
<!-- buttons -->
<div class="a" style="left:730px;top:312px;width:109px;height:23px;background:#e1e1e1;border:2px solid #0078d7"></div>
<div class="t" style="left:730px;width:109px;text-align:center;top:318px;color:#000">Ignore Once</div>
<div class="a" style="left:730px;top:345px;width:109px;height:23px;background:#e1e1e1;border:1px solid #adadad"></div>
<div class="t" style="left:730px;width:109px;text-align:center;top:351px;color:#000">Ignore All</div>
<div class="a" style="left:730px;top:378px;width:109px;height:23px;background:#e1e1e1;border:1px solid #adadad"></div>
<div class="t" style="left:730px;width:109px;text-align:center;top:384px;color:#000">Add To Dictionary</div>
<div class="t" style="left:393px;top:424px;color:#000">Suggestions:</div>
<!-- listbox -->
<div class="a" style="left:393px;top:445px;width:325px;height:96px;background:#fff;border:1px solid #828790"></div>
<div class="a" style="left:700px;top:446px;width:17px;height:94px;background:#f0f0f0"></div>
<svg style="left:703px;top:452px" width="10" height="6"><path d="M1 5 L5 1 L9 5" fill="none" stroke="#a3a3a3" stroke-width="1.3"/></svg>
<svg style="left:703px;top:528px" width="10" height="6"><path d="M1 1 L5 5 L9 1" fill="none" stroke="#a3a3a3" stroke-width="1.3"/></svg>
<div class="t" style="left:397px;top:449px;color:#6d6d6d">(No Spelling Suggestions)</div>
<div class="a" style="left:730px;top:446px;width:109px;height:23px;background:#cccccc;border:1px solid #bfbfbf"></div>
<div class="t" style="left:730px;width:109px;text-align:center;top:452px;color:#a0a0a0">Change</div>
<div class="a" style="left:730px;top:479px;width:109px;height:23px;background:#cccccc;border:1px solid #bfbfbf"></div>
<div class="t" style="left:730px;width:109px;text-align:center;top:485px;color:#a0a0a0">Change All</div>
<div class="t" style="left:393px;top:562px;color:#000">Suggestions Dictionary:</div>
<!-- combo -->
<div class="a" style="left:532px;top:556px;width:186px;height:24px;background:#cce4f7;border:1px solid #005499;border-bottom-width:2px"></div>
<div class="t" style="left:537px;top:562px;color:#000">en_US.dic</div>
<svg style="left:704px;top:565px" width="10" height="6"><path d="M1 1 L5 5 L9 1" fill="none" stroke="#333" stroke-width="1.2"/></svg>
<!-- dropdown -->
<div class="a" style="left:532px;top:580px;width:186px;height:31px;background:#fff;border:1px solid #0078d7;border-top:none;box-shadow:3px 3px 4px rgba(0,0,0,0.35)"></div>
<div class="a" style="left:532px;top:595px;width:186px;height:16px;background:#0078d7"></div>
<div class="t" style="left:536px;top:582px;color:#000">en_US.dic</div>
<div class="t" style="left:535px;top:597px;color:#fff">Shared Medical Dictionary</div>
<!-- bottom buttons -->
<div class="a" style="left:394px;top:595px;width:73px;height:23px;background:#e1e1e1;border:1px solid #adadad"></div>
<div class="t" style="left:394px;width:73px;text-align:center;top:601px;color:#000">Options...</div>
<div class="a" style="left:766px;top:595px;width:73px;height:23px;background:#e1e1e1;border:1px solid #adadad"></div>
<div class="t" style="left:766px;width:73px;text-align:center;top:601px;color:#000">Cancel</div>

<!-- ===== STATUS BAR ===== -->
<div class="a" id="status" style="left:0;top:849px;width:1079px;height:21px;background:#2b579a"></div>


<div class="t" style="left:20px;top:855px;color:#fff">Section: 1/1</div>
<div class="a" style="left:97px;top:851px;width:1px;height:17px;background:#fff"></div>
<div class="t" style="left:113px;top:855px;color:#fff">Page: 1/1</div>
<div class="a" style="left:176px;top:851px;width:1px;height:17px;background:#fff"></div>
<div class="t" style="left:185px;top:855px;color:#fff">Line: 38</div>
<div class="a" style="left:240px;top:851px;width:1px;height:17px;background:#fff"></div>
<div class="t" style="left:249px;top:855px;color:#fff">Column: 7</div>
<div class="a" style="left:325px;top:851px;width:1px;height:17px;background:#fff"></div>
<div class="t" style="left:334px;top:855px;color:#fff">English (United States)</div>
<div class="a" style="left:461px;top:851px;width:1px;height:17px;background:#fff"></div>
<div class="a" style="left:502px;top:851px;width:1px;height:17px;background:#fff"></div>
<div class="a" style="left:549px;top:851px;width:1px;height:17px;background:#fff"></div>
<div class="t" style="left:558px;top:855px;color:#fff">NUM</div>
<div class="a" style="left:595px;top:851px;width:1px;height:17px;background:#fff"></div>
<svg style="left:851px;top:852px" width="17" height="16" viewBox="0 0 17 16">
  <rect x="5" y="4.5" width="7" height="7" fill="none" stroke="#fff" stroke-width="1"/>
  <rect x="6.5" y="6.5" width="4" height="1" fill="#fff"/><rect x="6.5" y="8.5" width="4" height="1" fill="#fff"/>
  <path d="M8.5 0 L6 2.5 H11 Z M8.5 16 L6 13.5 H11 Z M0 8 L2.5 5.5 V10.5 Z M17 8 L14.5 5.5 V10.5 Z" fill="#fff"/>
</svg>
<svg style="left:869px;top:852px" width="17" height="16" viewBox="0 0 17 16">
  <rect x="4.5" y="2.5" width="8" height="11" fill="none" stroke="#fff" stroke-width="1"/>
  <rect x="6.5" y="5" width="4" height="1" fill="#fff"/><rect x="6.5" y="7.5" width="4" height="1" fill="#fff"/><rect x="6.5" y="10" width="4" height="1" fill="#fff"/>
  <path d="M0 8 L2.5 5.5 V10.5 Z M17 8 L14.5 5.5 V10.5 Z" fill="#fff"/>
</svg>
<div class="a" style="left:891px;top:859px;width:8px;height:2px;background:#fff"></div>
<div class="a" style="left:910px;top:859px;width:91px;height:1px;background:#fff"></div>
<div class="a" style="left:955px;top:855px;width:5px;height:11px;background:#fff"></div>
<div class="a" style="left:1012px;top:859px;width:9px;height:2px;background:#fff"></div>
<div class="a" style="left:1015.5px;top:855.5px;width:2px;height:9px;background:#fff"></div>
<div class="t" style="left:1034px;top:855px;color:#fff">120%</div>

</body></html>
